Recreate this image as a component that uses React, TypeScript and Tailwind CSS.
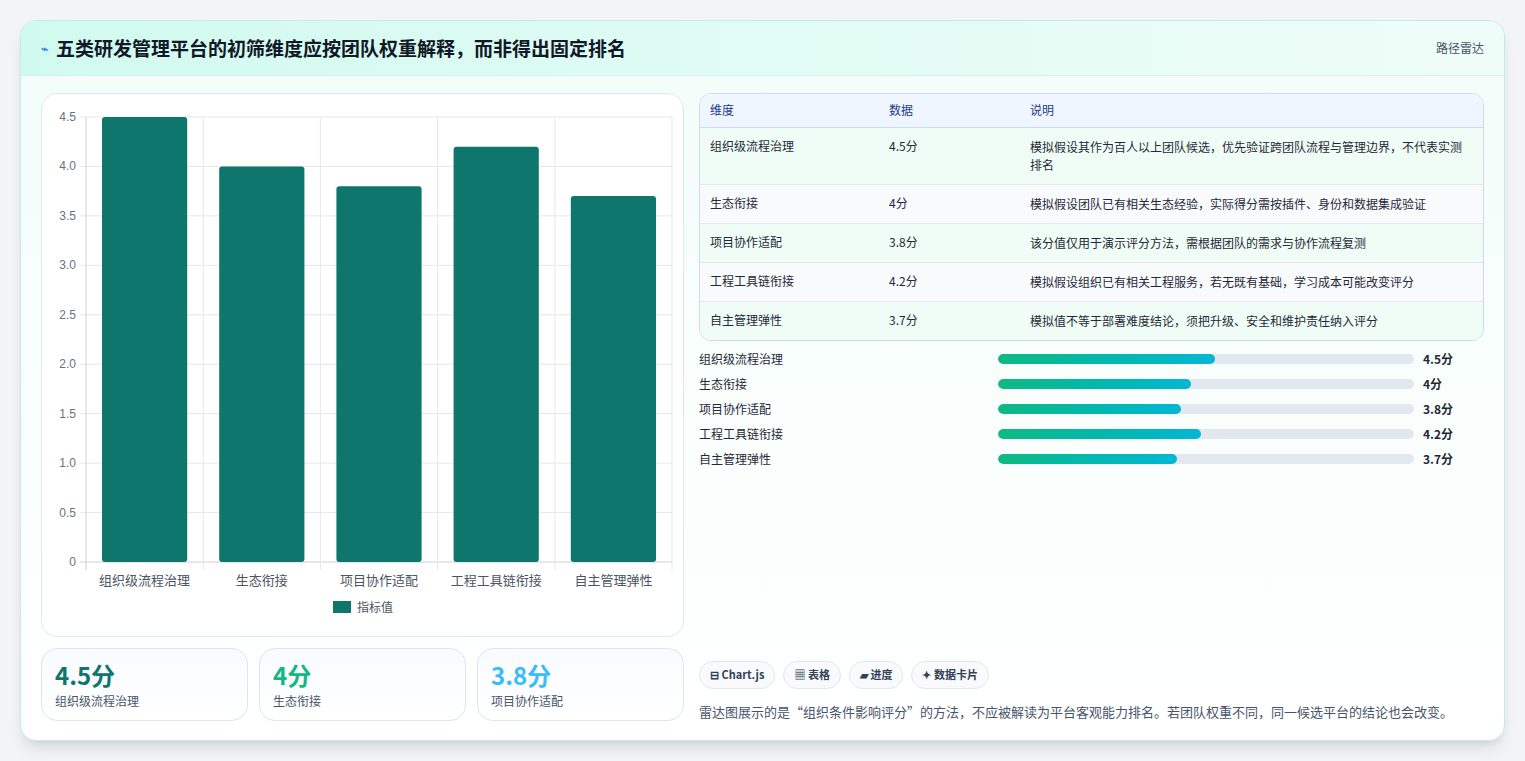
const data = [
  { name: "组织级流程治理", value: 4.5, desc: "模拟假设其作为百人以上团队候选，优先验证跨团队流程与管理边界，不代表实测排名" },
  { name: "生态衔接", value: 4, desc: "模拟假设团队已有相关生态经验，实际得分需按插件、身份和数据集成验证" },
  { name: "项目协作适配", value: 3.8, desc: "该分值仅用于演示评分方法，需根据团队的需求与协作流程复测" },
  { name: "工程工具链衔接", value: 4.2, desc: "模拟假设组织已有相关工程服务，若无既有基础，学习成本可能改变评分" },
  { name: "自主管理弹性", value: 3.7, desc: "模拟值不等于部署难度结论，须把升级、安全和维护责任纳入评分" },
];

const font = { fontFamily: '"Noto Sans CJK SC", "Noto Sans", sans-serif' };

const BarChart = () => {
  const left = 44, right = 630, top = 23, bottom = 468;
  const unit = (bottom - top) / 4.5;
  const step = (right - left) / 5;
  const ticks = [0, 0.5, 1, 1.5, 2, 2.5, 3, 3.5, 4, 4.5];
  return (
    <svg width="643" height="541" className="block">
      {ticks.map((t) => (
        <g key={t}>
          <line x1={left - 6} x2={right} y1={bottom - t * unit} y2={bottom - t * unit} stroke={t === 0 ? "#cbd0d8" : "#e5e7eb"} />
          <text x={left - 10} y={bottom - t * unit + 4} textAnchor="end" fontSize="12" fill="#6b7280" fontFamily="Liberation Sans, sans-serif">
            {t === 0 ? "0" : t.toFixed(1)}
          </text>
        </g>
      ))}
      {[0, 1, 2, 3, 4, 5].map((i) => (
        <line key={i} x1={left + i * step} x2={left + i * step} y1={top} y2={bottom + 8} stroke={i === 0 ? "#cbd0d8" : "#e5e7eb"} />
      ))}
      {data.map((d, i) => {
        const x = left + i * step + 16;
        const h = d.value * unit;
        return (
          <g key={d.name}>
            <rect x={x} y={bottom - h} width={step - 32} height={h} rx="3" fill="#0f766e" />
            <text x={left + i * step + step / 2} y={bottom + 23} textAnchor="middle" fontSize="13" fill="#4b5563" style={font}>
              {d.name}
            </text>
          </g>
        );
      })}
      <rect x="291" y="507" width="18" height="12" fill="#0f766e" />
      <text x="315" y="518" fontSize="12" fill="#4b5563" style={font}>指标值</text>
    </svg>
  );
};

const App = () => {
  return (
    <div className="min-h-screen bg-[#f3f4f6] pt-5 pb-5 px-5" style={font}>
      <div className="rounded-2xl border border-[#bfeee3] bg-gradient-to-b from-[#f2fdf9] to-white shadow-lg overflow-hidden">
        <div className="h-[55px] flex items-center justify-between px-5 bg-gradient-to-r from-[#d1faef] to-[#effdf8] border-b border-[#d7f3ea]">
          <h1 className="flex items-center gap-2 text-[19px] font-bold text-[#111827]">
            <span className="text-[#3b82f6] text-xs">⌁</span>
            五类研发管理平台的初筛维度应按团队权重解释，而非得出固定排名
          </h1>
          <span className="text-xs text-[#475569]">路径雷达</span>
        </div>
        <div className="flex gap-[15px] px-5 pt-[17px] pb-[19px]">
          <div className="w-[643px] flex flex-col gap-[11px]">
            <div className="h-[544px] rounded-2xl border border-[#e2e8f0] bg-white">
              <BarChart />
            </div>
            <div className="grid grid-cols-3 gap-[11px]">
              {[
                { v: "4.5分", c: "text-[#0f766e]", n: "组织级流程治理" },
                { v: "4分", c: "text-[#10b981]", n: "生态衔接" },
                { v: "3.8分", c: "text-[#38bdf8]", n: "项目协作适配" },
              ].map((s) => (
                <div key={s.n} className="h-[73px] rounded-2xl border border-[#dbe6f0] bg-gradient-to-b from-[#f8fbff] to-white px-[13px] pt-[10px]">
                  <div className={`text-[24px] font-bold leading-8 ${s.c}`}>{s.v}</div>
                  <div className="text-xs text-[#475569] mt-0.5">{s.n}</div>
                </div>
              ))}
            </div>
          </div>
          <div className="flex-1 flex flex-col">
            <div className="rounded-xl border border-[#cfdbe8] overflow-hidden bg-white">
              <table className="w-full text-xs text-[#1f2937]">
                <thead>
                  <tr className="bg-[#eff6ff] text-[#1e3a8a] h-[33px] border-b border-[#cfdbe8]">
                    <th className="text-left font-normal pl-[10px] w-[189px]">维度</th>
                    <th className="text-left font-normal w-[141px]">数据</th>
                    <th className="text-left font-normal">说明</th>
                  </tr>
                </thead>
                <tbody>
                  {data.map((d, i) => (
                    <tr key={d.name} className={`${i % 2 === 0 ? "bg-[#f0fdf6]" : "bg-[#f8fafc]"} border-t border-[#e5e7eb] align-top`}>
                      <td className="pl-[10px] py-[10px]">{d.name}</td>
                      <td className="py-[10px]">{d.value}分</td>
                      <td className="py-[10px] pr-3 leading-[18px]">{d.desc}</td>
                    </tr>
                  ))}
                </tbody>
              </table>
            </div>
            <div className="mt-[9px] flex flex-col gap-[7px]">
              {data.map((d) => (
                <div key={d.name} className="flex items-center h-[18px] text-xs text-[#1f2937]">
                  <span className="w-[299px]">{d.name}</span>
                  <div className="w-[416px] h-[10px] rounded-full bg-[#e2e8f0] overflow-hidden">
                    <div className="h-full rounded-full bg-gradient-to-r from-[#10b981] to-[#06b6d4]" style={{ width: `${d.value * 11.6}%` }} />
                  </div>
                  <span className="ml-[9px] font-bold">{d.value}分</span>
                </div>
              ))}
            </div>
            <div className="flex-1" />
            <div className="flex gap-2">
              {["⊟ Chart.js", "▦ 表格", "▰ 进度", "✦ 数据卡片"].map((c) => (
                <span key={c} className="h-[28px] px-[10px] flex items-center rounded-full border border-[#e5e7eb] bg-[#f8fafc] text-[11px] font-bold text-[#334155]">
                  {c}
                </span>
              ))}
            </div>
            <p className="mt-[13px] text-[13px] text-[#475569]">
              雷达图展示的是“组织条件影响评分”的方法，不应被解读为平台客观能力排名。若团队权重不同，同一候选平台的结论也会改变。
            </p>
          </div>
        </div>
      </div>
    </div>
  );
};

export default App;
